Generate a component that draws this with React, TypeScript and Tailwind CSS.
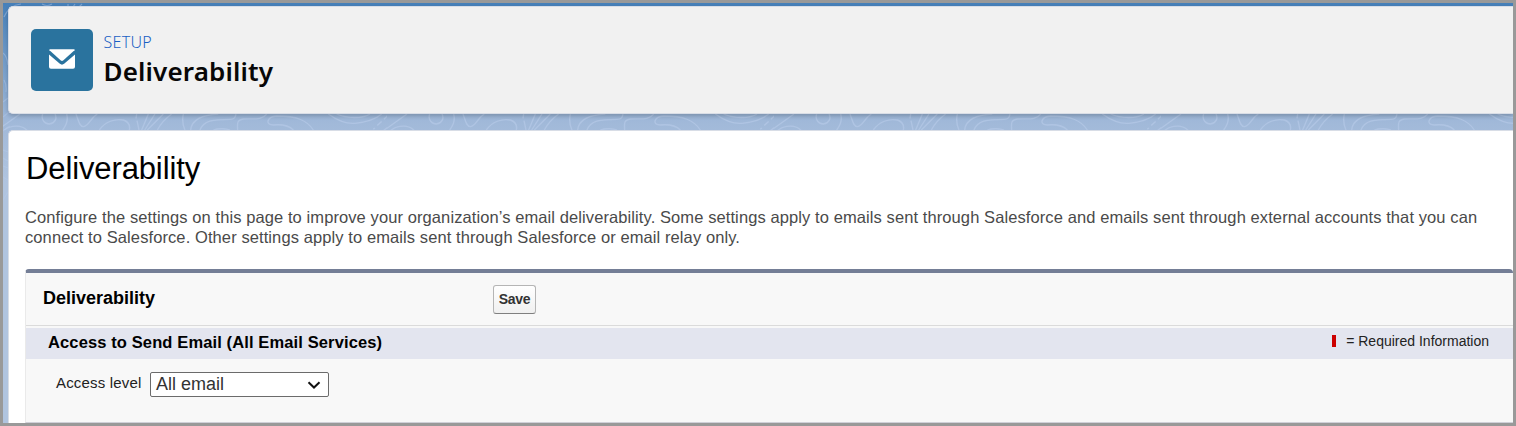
import React from "react";

function Contours() {
  return (
    <svg className="absolute inset-0 h-full w-full" viewBox="3 3 1510 420" preserveAspectRatio="none" fill="none">
      <defs>
        <pattern id="contours" width="387" height="16" patternUnits="userSpaceOnUse" y="114">
          <g transform="scale(0.33333) translate(0 -42)" stroke="#b6cae8" strokeOpacity="0.7" strokeWidth="4">
            <path d="M-10 92L60 42M0 105C15 78 60 68 82 92" />
            <path d="M128 42C122 60 135 72 148 72C165 70 172 55 165 42" />
            <path d="M200 42C205 60 200 75 188 90" />
            <path d="M228 42C235 60 238 80 250 80C268 78 270 55 292 42" />
            <path d="M298 90C315 65 345 55 370 60C388 66 390 80 388 90" />
            <path d="M410 42L408 55M411 62L417 90M445 42L425 90M465 42L434 90M490 42L442 90M515 42C490 60 480 75 472 90" />
            <path d="M550 42C546 60 548 75 555 90M655 42C600 45 575 60 572 90" />
            <path d="M600 90C610 62 640 58 690 58C705 58 706 50 708 42" />
            <path d="M800 42C785 62 760 55 730 57C710 60 712 70 713 90M640 90C655 84 680 86 690 90" />
            <path d="M940 90C920 60 890 48 830 48C800 50 795 75 820 75C850 72 870 80 880 90" />
            <path d="M985 42C1010 60 1040 72 1065 70C1100 66 1130 55 1145 42M1010 42C1040 56 1090 56 1110 42" />
            <path d="M1165 45L1120 88" strokeDasharray="18 10" />
            <path d="M1150 92L1215 42" />
          </g>
        </pattern>
      </defs>
      <rect x="3" y="114" width="1510" height="16" fill="url(#contours)" />
      <g stroke="#b6cae8" strokeOpacity="0.45" strokeWidth="1.2">
        <path d="M4 17C7 10 12 5 21 4M42 4q5 3 10 0M68 4v3M73 7l2-3M79 7l3-3M3 53q4 3 5 12M4 80q3 5 2 12M3 102l5-4M3 117l6-5M3 131q4-4 7-5M3 150l5 2M3 158l5 3M3 166l5 2M3 177l5 3M3 200l5-8" />
      </g>
    </svg>
  );
}

export default function App() {
  return (
    <div className="h-[426px] w-full overflow-hidden border-[3px] border-[#999999] font-['Liberation_Sans',Arial,sans-serif]">
      <div className="relative flex h-full flex-col overflow-hidden bg-[linear-gradient(to_bottom,#4680b9_0px,#a1b9d9_120px,#b0c4df_180px,#b0c4df_100%)] pt-[3px] pl-[5px]">
        <Contours />
        <header className="relative flex h-[108px] shrink-0 items-center rounded-l-[5px] border-y border-l border-[#d8dde6] bg-[#f1f1f1] pl-[22px] shadow-[0_2px_4px_rgba(0,0,0,0.2)]">
          <div className="flex size-[62px] items-center justify-center rounded-[5px] bg-[#2a739e]">
            <svg className="mr-px mb-0.5 h-5 w-[26px]" viewBox="0 0 27 20" fill="#fff">
              <path d="M1 0H26Q27 0 26.5 1L14.7 11.6Q13.5 12.6 12.3 11.6L.5 1Q0 0 1 0Z" />
              <path d="M0 5.2L11.3 15Q13.5 16.7 15.7 15L27 5.2V18Q27 20 25 20H2Q0 20 0 18Z" />
            </svg>
          </div>
          <div className="ml-[10.5px] flex flex-col pb-px font-['Noto_Sans','Open_Sans',sans-serif]">
            <span className="text-[16px] leading-[20px] font-light tracking-[0.3px] text-[#1a5fc4]">SETUP</span>
            <h1 className="mt-[2px] text-[26px] leading-[34px] font-semibold tracking-[0.15px] text-[#080707]">Deliverability</h1>
          </div>
        </header>

        <main className="relative mt-4 flex flex-1 flex-col rounded-tl-[5px] border-t border-l border-[#d8dde6] bg-white pt-[20px] pl-[16px]">
          <h2 className="pl-px text-[31px] leading-[36px] tracking-[-0.12px] text-black">Deliverability</h2>
          <p className="mt-[20px] text-[16.5px] leading-[20px] tracking-[0.093px] whitespace-nowrap text-[#4a4a4a]">
            Configure the settings on this page to improve your organization’s email deliverability. Some settings apply to emails sent through Salesforce and emails sent through external accounts that you can
            <br />
            connect to Salesforce. Other settings apply to emails sent through Salesforce or email relay only.
          </p>

          <section className="mt-[22px] flex h-[154px] shrink-0 flex-col rounded-t border-t-4 border-b border-l border-t-[#747e96] border-b-[#d0d0d8] border-l-[#eaeaea] bg-[#f8f8f8]">
            <div className="flex h-[53px] items-center border-b border-[#dbdbdb] pl-[17px]">
              <h3 className="w-[450px] pb-0.5 text-[18px] font-bold text-black">Deliverability</h3>
              <button className="h-[29px] w-[43px] rounded-[3px] border border-[#b5b5b5] border-b-[#7f7f7f] bg-linear-to-b from-white to-[#f0f0f0] text-[14px] leading-none font-bold tracking-[-0.3px] text-[#333333]">
                Save
              </button>
            </div>
            <div className="mt-[2px] flex h-[31px] items-center justify-between bg-[#e3e5ef] pr-6 pl-[22px]">
              <h4 className="pb-[3px] text-[16.5px] font-bold tracking-[0.12px] text-black">Access to Send Email (All Email Services)</h4>
              <div className="flex items-center pb-1 text-[14px] text-[#222222]">
                <span className="mr-[10px] mb-px h-3 w-1 bg-[#cc0000]" />= Required Information
              </div>
            </div>
            <div className="flex items-start pt-[13px] pl-[30px]">
              <span className="w-[94px] pt-px text-[15px] leading-[20px] tracking-[0.18px] text-[#222222]">Access level</span>
              <div className="flex h-[25px] w-[179px] items-center justify-between rounded-[2px] border border-[#6b6b6b] bg-white pr-[7px] pl-[5px] text-[18px] leading-none text-[#333333]">
                <span className="pb-px">All email</span>
                <svg className="h-2 w-[14px]" viewBox="0 0 14 8" fill="none" stroke="#111" strokeWidth="2">
                  <path d="M1.5 1.2L7 6.5L12.5 1.2" />
                </svg>
              </div>
            </div>
          </section>
        </main>
      </div>
    </div>
  );
}
